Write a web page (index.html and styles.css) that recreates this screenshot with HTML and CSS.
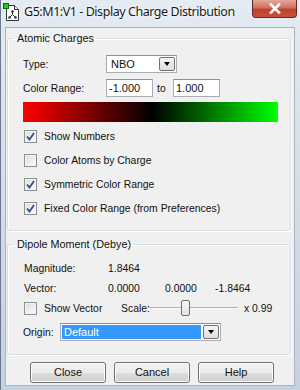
FILE: index.html
```html
<!DOCTYPE html>
<html lang="en">

<head>
    <meta charset="UTF-8">
    <meta name="viewport" content="width=device-width, initial-scale=1.0">
    <title>Display Charge Distribution</title>
    <link rel="stylesheet" href="styles.css">
</head>

<body>
    <div id="window">
        <div class="titlebar">
            <svg class="app-icon" width="17" height="18" viewBox="0 0 17 18">
                <path d="M3.5 2.5 H11.5 L15.5 6.5 V17.5 H3.5 Z" fill="#fff" stroke="#333" />
                <path d="M11.5 2.5 V6.5 H15.5" fill="#e8e8e8" stroke="#333" />
                <rect x="0.5" y="0.5" width="5" height="5" fill="#22cc22" stroke="#126612" />
                <path d="M9.5 8.5 V11.5 L6.5 14.5 M9.5 11.5 L12.5 14.5" stroke="#333" fill="none" />
                <circle cx="9.5" cy="8.5" r="1.3" fill="#333" />
                <circle cx="6.5" cy="14.5" r="1.3" fill="#333" />
                <circle cx="12.5" cy="14.5" r="1.3" fill="#333" />
            </svg>
            <span class="caption">G5:M1:V1 - Display Charge Distribution</span>
            <div class="close-btn">
                <svg width="14" height="11" viewBox="0 0 14 11">
                    <path d="M3 1.5 L11 9.5 M11 1.5 L3 9.5" stroke="#fff" stroke-width="2.6" stroke-linecap="square" />
                </svg>
            </div>
        </div>

        <div class="client">
            <fieldset class="group group-charges">
                <legend>Atomic Charges</legend>

                <div class="row row-type">
                    <span class="label label-wide">Type:</span>
                    <div class="combo combo-type">
                        <span class="combo-text">NBO</span>
                        <span class="combo-arrow"><span class="tri"></span></span>
                    </div>
                </div>

                <div class="row row-range">
                    <span class="label label-wide">Color Range:</span>
                    <div class="textbox">-1.000</div>
                    <span class="to">to</span>
                    <div class="textbox">1.000</div>
                </div>

                <div class="gradient"></div>

                <div class="check-list">
                    <div class="check-row">
                        <span class="checkbox checked"><svg width="11" height="11" viewBox="0 0 11 11"><path d="M2 5.5 L4.5 8.5 L9 2" stroke="#2b4a8c" stroke-width="1.7" fill="none" /></svg></span>
                        <span>Show Numbers</span>
                    </div>
                    <div class="check-row">
                        <span class="checkbox"></span>
                        <span>Color Atoms by Charge</span>
                    </div>
                    <div class="check-row">
                        <span class="checkbox checked"><svg width="11" height="11" viewBox="0 0 11 11"><path d="M2 5.5 L4.5 8.5 L9 2" stroke="#2b4a8c" stroke-width="1.7" fill="none" /></svg></span>
                        <span>Symmetric Color Range</span>
                    </div>
                    <div class="check-row">
                        <span class="checkbox checked"><svg width="11" height="11" viewBox="0 0 11 11"><path d="M2 5.5 L4.5 8.5 L9 2" stroke="#2b4a8c" stroke-width="1.7" fill="none" /></svg></span>
                        <span>Fixed Color Range (from Preferences)</span>
                    </div>
                </div>
            </fieldset>

            <fieldset class="group group-dipole">
                <legend>Dipole Moment (Debye)</legend>

                <div class="row row-magnitude">
                    <span class="label label-dip">Magnitude:</span>
                    <span>1.8464</span>
                </div>

                <div class="row row-vector">
                    <span class="label label-dip">Vector:</span>
                    <span class="vec vec-1">0.0000</span>
                    <span class="vec vec-2">0.0000</span>
                    <span>-1.8464</span>
                </div>

                <div class="row row-show">
                    <span class="checkbox"></span>
                    <span class="show-text">Show Vector</span>
                    <span class="scale-label">Scale:</span>
                    <div class="slider">
                        <div class="track"></div>
                        <div class="thumb"></div>
                    </div>
                    <span class="scale-value">x 0.99</span>
                </div>

                <div class="row row-origin">
                    <span class="label label-origin">Origin:</span>
                    <div class="combo combo-origin">
                        <span class="combo-text selected">Default</span>
                        <span class="combo-arrow"><span class="tri"></span></span>
                    </div>
                </div>
            </fieldset>

            <div class="buttons">
                <div class="button">Close</div>
                <div class="button">Cancel</div>
                <div class="button">Help</div>
            </div>
        </div>
    </div>
</body>

</html>
```

FILE: styles.css
```css
body {
    margin: 0;
    font-family: "Liberation Sans", Arial, sans-serif;
    font-size: 10.4px;
    color: #111;
}

#window {
    width: 300px;
    height: 390px;
    box-sizing: border-box;
    padding: 0 5px 4px 4px;
    display: flex;
    flex-direction: column;
    background: linear-gradient(to bottom, #e4ebf2 0%, #d6e0ea 40%, #c4d2df 100%);
    border-left: 1px solid #69788a;
}

/* title bar */

.titlebar {
    height: 27px;
    display: flex;
    align-items: flex-start;
    flex-shrink: 0;
}

.app-icon {
    margin: 3px 0 0 -2px;
    flex-shrink: 0;
}

.caption {
    margin: 3px 0 0 4px;
    font-family: "Noto Sans", "Open Sans", sans-serif;
    font-size: 12.5px;
    letter-spacing: -0.45px;
    white-space: nowrap;
    color: #1a1a1a;
    text-shadow: 0 0 6px #fff, 0 0 3px #fff;
}

.close-btn {
    margin-left: auto;
    margin-right: -2px;
    width: 45px;
    height: 18px;
    flex-shrink: 0;
    box-sizing: border-box;
    border: 1px solid #5a2a24;
    border-top: none;
    border-radius: 0 0 4px 4px;
    background: linear-gradient(to bottom, #e6a79b 0%, #d2705f 45%, #c0402b 55%, #c7513b 100%);
    display: flex;
    align-items: center;
    justify-content: center;
}

/* client area */

.client {
    flex-grow: 1;
    background-color: #f0f0f0;
    border: 1px solid #a9b5c2;
    padding: 0 3px 0 1px;
    display: flex;
    flex-direction: column;
}

.group {
    margin: 0;
    padding: 0 0 0 15px;
    border: 1px solid #d5dfe5;
    border-radius: 3px;
    box-shadow: inset 1px 1px 0 #fff, 1px 1px 0 #fff;
}

.group legend {
    padding: 0 2px;
    margin-left: -8px;
    line-height: 14px;
    font-size: 10.8px;
}

.group-charges {
    margin-top: 3px;
    padding-bottom: 10px;
}

.group-dipole {
    margin-top: 6px;
    padding-bottom: 13px;
}

.row {
    display: flex;
    align-items: center;
}

.label-wide {
    width: 83px;
}

.row-type {
    margin-top: 10px;
    height: 18px;
}

.row-range {
    margin-top: 6px;
    height: 18px;
}

/* combo boxes */

.combo {
    height: 18px;
    box-sizing: border-box;
    border: 1px solid #abadb3;
    border-top-color: #8e8f8f;
    background-color: #fff;
    display: flex;
    align-items: stretch;
}

.combo-type {
    width: 71px;
}

.combo-origin {
    width: 161px;
}

.combo-text {
    flex-grow: 1;
    padding-left: 4px;
    line-height: 16px;
    font-size: 11px;
}

.combo-text.selected {
    margin: 1px;
    padding-left: 2px;
    line-height: 14px;
    background-color: #3399ff;
    color: #fff;
}

.combo-arrow {
    width: 14px;
    margin: 1px;
    border: 1px solid #707070;
    border-radius: 2px;
    background: linear-gradient(to bottom, #f6f6f6, #dedede);
    display: flex;
    align-items: center;
    justify-content: center;
}

.tri {
    width: 0;
    height: 0;
    border-left: 3.5px solid transparent;
    border-right: 3.5px solid transparent;
    border-top: 4px solid #000;
}

/* text fields */

.textbox {
    width: 47px;
    height: 18px;
    box-sizing: border-box;
    border: 1px solid #abadb3;
    border-top-color: #8e8f8f;
    background-color: #fff;
    padding-left: 2px;
    line-height: 16px;
    font-size: 11px;
}

.to {
    width: 20px;
    padding-left: 4px;
    box-sizing: border-box;
}

.gradient {
    margin-top: 5px;
    width: 255px;
    height: 20px;
    background: linear-gradient(to right, #ff0000 0%, #000000 51%, #00ff00 100%);
}

/* check boxes */

.check-list {
    margin-top: 2px;
}

.check-row {
    height: 24px;
    display: flex;
    align-items: center;
    padding-left: 1px;
}

.checkbox {
    width: 13px;
    height: 13px;
    box-sizing: border-box;
    border: 1px solid #8e8f8f;
    background: linear-gradient(135deg, #dcdcdc 0%, #f0f0f0 60%, #fbfbfb 100%);
    box-shadow: inset 0 0 0 1px #f4f4f4;
    margin-right: 7px;
    display: flex;
    align-items: center;
    justify-content: center;
    flex-shrink: 0;
}

/* dipole group */

.row-magnitude {
    margin-top: 9px;
    height: 16px;
    padding-left: 1px;
}

.row-vector {
    margin-top: 4px;
    height: 16px;
    padding-left: 1px;
}

.label-dip {
    width: 84px;
}

.vec-1 {
    width: 57px;
}

.vec-2 {
    width: 50px;
}

.row-show {
    margin-top: 3px;
    height: 18px;
    padding-left: 1px;
}

.show-text {
    width: 77px;
}

.scale-label {
    width: 27px;
}

.slider {
    position: relative;
    width: 90px;
    height: 16px;
    margin-right: 6px;
    display: flex;
    align-items: center;
    flex-shrink: 0;
}

.track {
    width: 90px;
    height: 1px;
    background-color: #b0b0b0;
    border-bottom: 1px solid #fafafa;
}

.thumb {
    position: absolute;
    left: 33px;
    top: 0;
    width: 9px;
    height: 16px;
    box-sizing: border-box;
    border: 1px solid #707070;
    border-radius: 2px;
    background: linear-gradient(to bottom, #f8f8f8, #e2e2e2);
}

.row-origin {
    margin-top: 6px;
    height: 18px;
}

.label-origin {
    width: 37px;
}

/* buttons */

.buttons {
    margin-top: 7px;
    padding-left: 23px;
    display: flex;
    gap: 8px;
}

.button {
    width: 76px;
    height: 21px;
    box-sizing: border-box;
    border: 1px solid #707070;
    border-radius: 3px;
    background: linear-gradient(to bottom, #f2f2f2 0%, #ebebeb 50%, #dddddd 51%, #cfcfcf 100%);
    box-shadow: inset 0 0 0 1px #fcfcfc;
    text-align: center;
    line-height: 19px;
    font-size: 11px;
}
```
